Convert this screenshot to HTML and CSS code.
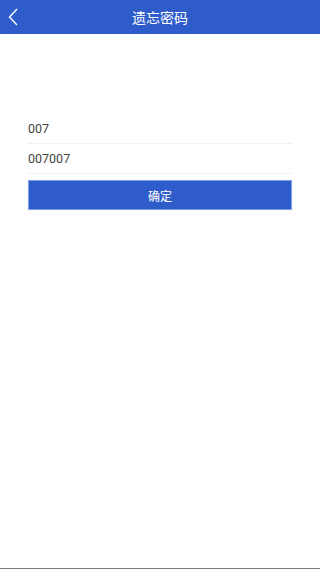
FILE: index.html
```html
<!DOCTYPE html>
<html lang="zh-CN">
<head>
    <meta charset="UTF-8">
    <meta name="viewport" content="width=device-width, initial-scale=1.0">
    <title>遗忘密码</title>
    <link rel="stylesheet" href="styles.css">
</head>
<body>
    <div class="header">
        <a class="back" href="#">
            <svg width="10" height="18" viewBox="0 0 10 18">
                <path d="M9 1 L1.5 9 L9 17" fill="none" stroke="#ffffff" stroke-width="1.4"/>
            </svg>
        </a>
        <h1>遗忘密码</h1>
    </div>

    <div class="form">
        <input type="text" class="field" value="007">
        <input type="text" class="field" value="007007">
        <button class="submit-btn">确定</button>
    </div>

    <div class="bottom-line"></div>
</body>
</html>
```

FILE: styles.css
```css
:root {
    --main-blue: #2f5ccb;
    --btn-border: #7e9ce6;
    --text-color: #444444;
    --line-color: #f1f1f1;
}

html, body {
    height: 100%;
}

body {
    font-family: Roboto, "Noto Sans CJK SC", sans-serif;
    margin: 0;
    background: #ffffff;
    display: flex;
    flex-direction: column;
}

.header {
    position: relative;
    height: 34px;
    background-color: var(--main-blue);
    display: flex;
    align-items: center;
    justify-content: center;
}

.header h1 {
    margin: 0;
    font-size: 14px;
    font-weight: normal;
    color: #ffffff;
}

.back {
    position: absolute;
    left: 8px;
    top: 8px;
    display: block;
    height: 18px;
}

.form {
    padding: 80px 28px 0;
    display: flex;
    flex-direction: column;
    flex: 1;
}

.field {
    box-sizing: border-box;
    height: 30px;
    padding: 0;
    border: none;
    border-bottom: 1px solid var(--line-color);
    font-family: Roboto, "Noto Sans CJK SC", sans-serif;
    font-size: 12.5px;
    color: var(--text-color);
    outline: none;
    background: transparent;
}

.submit-btn {
    box-sizing: border-box;
    margin-top: 6px;
    height: 30px;
    border: 1px solid var(--btn-border);
    background-color: var(--main-blue);
    color: #ffffff;
    font-family: "Noto Sans CJK SC", sans-serif;
    font-size: 12px;
    cursor: pointer;
}

.bottom-line {
    height: 1px;
    background: #7a7a7a;
}
```
